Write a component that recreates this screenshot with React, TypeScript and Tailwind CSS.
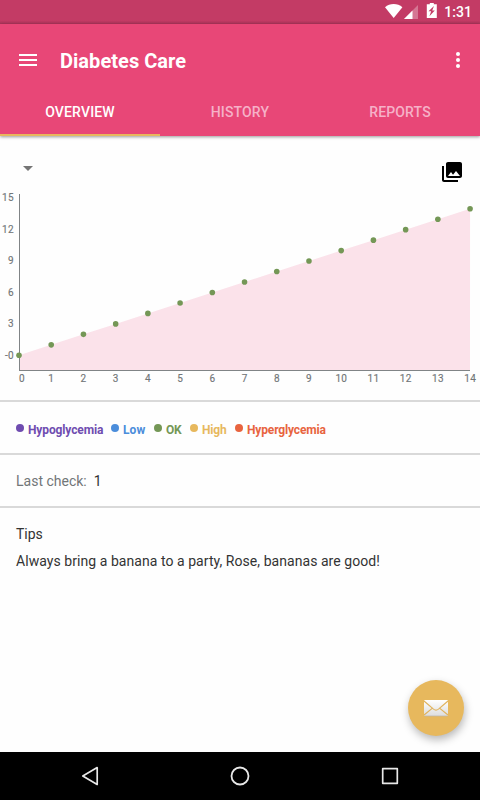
import React from "react";

const POINTS = Array.from({ length: 15 }, (_, i) => ({ x: 19 + i * 32.22, y: 163.3 - i * 10.47 }));
const Y_TICKS: [string, number][] = [["15", 9], ["12", 41], ["9", 72], ["6", 104], ["3", 135], ["-0", 167]];

const LEGEND = [
  { label: "Hypoglycemia", dot: "bg-[#6f4cb0]", text: "text-[#6f4cb0] tracking-[-0.12px]", width: "w-[95px]" },
  { label: "Low", dot: "bg-[#4b8ddb]", text: "text-[#4b8ddb] tracking-[0.1px]", width: "w-[43px]" },
  { label: "OK", dot: "bg-[#749756]", text: "text-[#749756] tracking-[-0.2px]", width: "w-[36px]" },
  { label: "High", dot: "bg-[#e7b85d]", text: "text-[#e7b85d] tracking-[-0.15px]", width: "w-[45px]" },
  { label: "Hyperglycemia", dot: "bg-[#e8643f]", text: "text-[#e8643f] tracking-[-0.15px]", width: "w-[100px]" },
];

function StatusBar() {
  return (
    <div className="flex h-6 items-center justify-end bg-gradient-to-b from-[#c33b65] from-85% to-[#a93458] pr-2 text-white">
      <svg width="76" height="24" viewBox="0 0 76 24" aria-hidden="true">
        <path d="M5 7.300C7.400 5.200 10.500 4.100 13.700 4.100s6.300 1.100 8.700 3.200L13.700 18z" fill="white" />
        <path d="M38 5v14H24z" fill="white" fillOpacity=".3" />
        <path d="M32.500 10.500V19H24z" fill="white" />
        <path d="M46.800 4.300h3V3h4v1.300h3V18h-10z" fill="white" />
        <path d="M54 6l-5.500 5.300h2.700L49.400 16.200l5.400-5.600h-2.600z" fill="#c33b65" />
      </svg>
      <span className="-ml-[12px] text-[14px] leading-6 font-medium tracking-[0.05px]">1:31</span>
    </div>
  );
}

function Header() {
  return (
    <header className="z-10 h-28 bg-[#e84777] text-white shadow-[0_1px_3px_rgba(0,0,0,0.4)]">
      <div className="flex h-16 items-center pt-2 pr-[10px] pl-4">
        <svg width="24" height="24" viewBox="0 0 24 24" fill="currentColor" aria-label="Menu">
          <path d="M3 18h18v-2H3v2zm0-5h18v-2H3v2zm0-7v2h18V6H3z" />
        </svg>
        <h1 className="mt-[2px] ml-5 flex-1 text-[20px] leading-6 font-bold tracking-[0.04px]">Diabetes Care</h1>
        <svg width="24" height="24" viewBox="0 0 24 24" fill="currentColor" aria-label="More">
          <circle cx="12" cy="6" r="2" /><circle cx="12" cy="12" r="2" /><circle cx="12" cy="18" r="2" />
        </svg>
      </div>
      <nav className="grid h-12 grid-cols-3 text-center text-[14px] font-medium tracking-[0.15px]">
        <span className="h-12 border-b-2 border-[#e7b85d] leading-[48px]">OVERVIEW</span>
        <span className="leading-[48px] text-[#f6b1c8]">HISTORY</span>
        <span className="leading-[48px] text-[#f6b1c8]">REPORTS</span>
      </nav>
    </header>
  );
}

function Chart() {
  const line = POINTS.map((p) => `${p.x},${p.y}`).join(" ");
  return (
    <svg className="block" width="480" height="208" viewBox="0 0 480 208">
      <polygon points={`19,178 ${line} 470,178`} fill="#fbe2ea" />
      <rect x="19" y="2" width="1" height="177" fill="#808486" />
      <rect x="19" y="178" width="451" height="1" fill="#808486" />
      {POINTS.map((p, i) => (
        <circle key={i} cx={p.x} cy={p.y} r="2.8" fill="#749756" />
      ))}
      <g fontSize="10" fill="#727678" stroke="#727678" strokeWidth=".15" letterSpacing=".3">
        {Y_TICKS.map(([label, y]) => (
          <text key={label} x="13.900" y={y} textAnchor="end">{label}</text>
        ))}
        {POINTS.map((p, i) => (
          <text key={i} x={i === 0 ? 22 : p.x + 0.1} y="190" textAnchor="middle">{i}</text>
        ))}
      </g>
    </svg>
  );
}

function NavigationBar() {
  return (
    <nav className="flex h-12 items-center justify-around bg-black px-[15px]">
      <svg width="24" height="24" viewBox="0 0 24 24" fill="none" stroke="#e8e8e8" strokeWidth="1.7" strokeLinejoin="round" aria-label="Back"><path d="M19.200 3.600v16.800L4.800 12z" /></svg>
      <svg width="24" height="24" viewBox="0 0 24 24" fill="none" stroke="#e8e8e8" strokeWidth="1.8" aria-label="Home"><circle cx="12" cy="12" r="8.500" /></svg>
      <svg width="24" height="24" viewBox="0 0 24 24" fill="none" stroke="#e8e8e8" strokeWidth="1.7" strokeLinejoin="round" aria-label="Recent"><path d="M4.700 4.700h14.600v14.600H4.700z" /></svg>
    </nav>
  );
}

export default function App() {
  return (
    <div className="relative flex h-[800px] w-[480px] flex-col overflow-hidden bg-white font-[Roboto,sans-serif] text-[#333333]">
      <StatusBar />
      <Header />
      <main className="flex-1 bg-[#fefefe]">
        <div className="flex h-14 items-center justify-between px-4 pt-4">
          <svg className="-mt-2" width="24" height="24" viewBox="0 0 24 24" fill="#757575" aria-label="Select range"><path d="M7 10h10l-5 5z" /></svg>
          <svg width="24" height="24" viewBox="0 0 24 24" fill="black" aria-label="Photo library">
            <path d="M22 16V4c0-1.100-.9-2-2-2H8c-1.100 0-2 .9-2 2v12c0 1.100.9 2 2 2h12c1.100 0 2-.9 2-2zm-11-4l2.030 2.710L16 11l4 5H8l3-4zM2 6v14c0 1.100.9 2 2 2h14v-2H4V6H2z" />
          </svg>
        </div>
        <Chart />
        <div className="flex h-[53px] items-center border-t-2 border-[#d9d9d9] px-4 pt-1">
          {LEGEND.map((item) => (
            <div key={item.label} className={`flex items-center ${item.width}`}>
              <span className={`mr-1 mb-1 size-2 shrink-0 rounded-full ${item.dot}`} />
              <span className={`text-[12px] leading-4 font-bold whitespace-nowrap ${item.text}`}>{item.label}</span>
            </div>
          ))}
        </div>
        <div className="flex h-[53px] items-center border-t-2 border-[#d9d9d9] px-4 pt-[2px] text-[14px]">
          <span className="text-[#727678]">Last check:</span>
          <span className="ml-[7px]">1</span>
        </div>
        <div className="border-t-2 border-[#d9d9d9] px-4 pt-[17px] text-[14px] leading-[19px]">
          <h2>Tips</h2>
          <p className="mt-2 tracking-[0.055px]">Always bring a banana to a party, Rose, bananas are good!</p>
        </div>
      </main>
      <button className="absolute top-[680px] left-[408px] flex size-14 items-center justify-center rounded-full bg-[#e7b85d] shadow-[1px_4px_9px_rgba(0,0,0,0.28)]" aria-label="Send message">
        <svg width="26" height="18" viewBox="0 0 26 18">
          <defs>
            <linearGradient id="paper" x1="0" y1="0" x2="0" y2="1">
              <stop offset="0" stopColor="#fff" /><stop offset="1" stopColor="#ddd" />
            </linearGradient>
          </defs>
          <rect x="1" y="1" width="24" height="16" rx="1" fill="url(#paper)" />
          <path d="M1 2l9.500 8.100q2.500 2 5 0L25 2M1 16l8.500-6.900M25 16l-8.500-6.900" fill="none" stroke="#e0b35d" strokeWidth="1.200" />
          <path d="M1.500 17h23" stroke="#bdb6a9" strokeWidth=".7" />
        </svg>
      </button>
      <NavigationBar />
    </div>
  );
}
